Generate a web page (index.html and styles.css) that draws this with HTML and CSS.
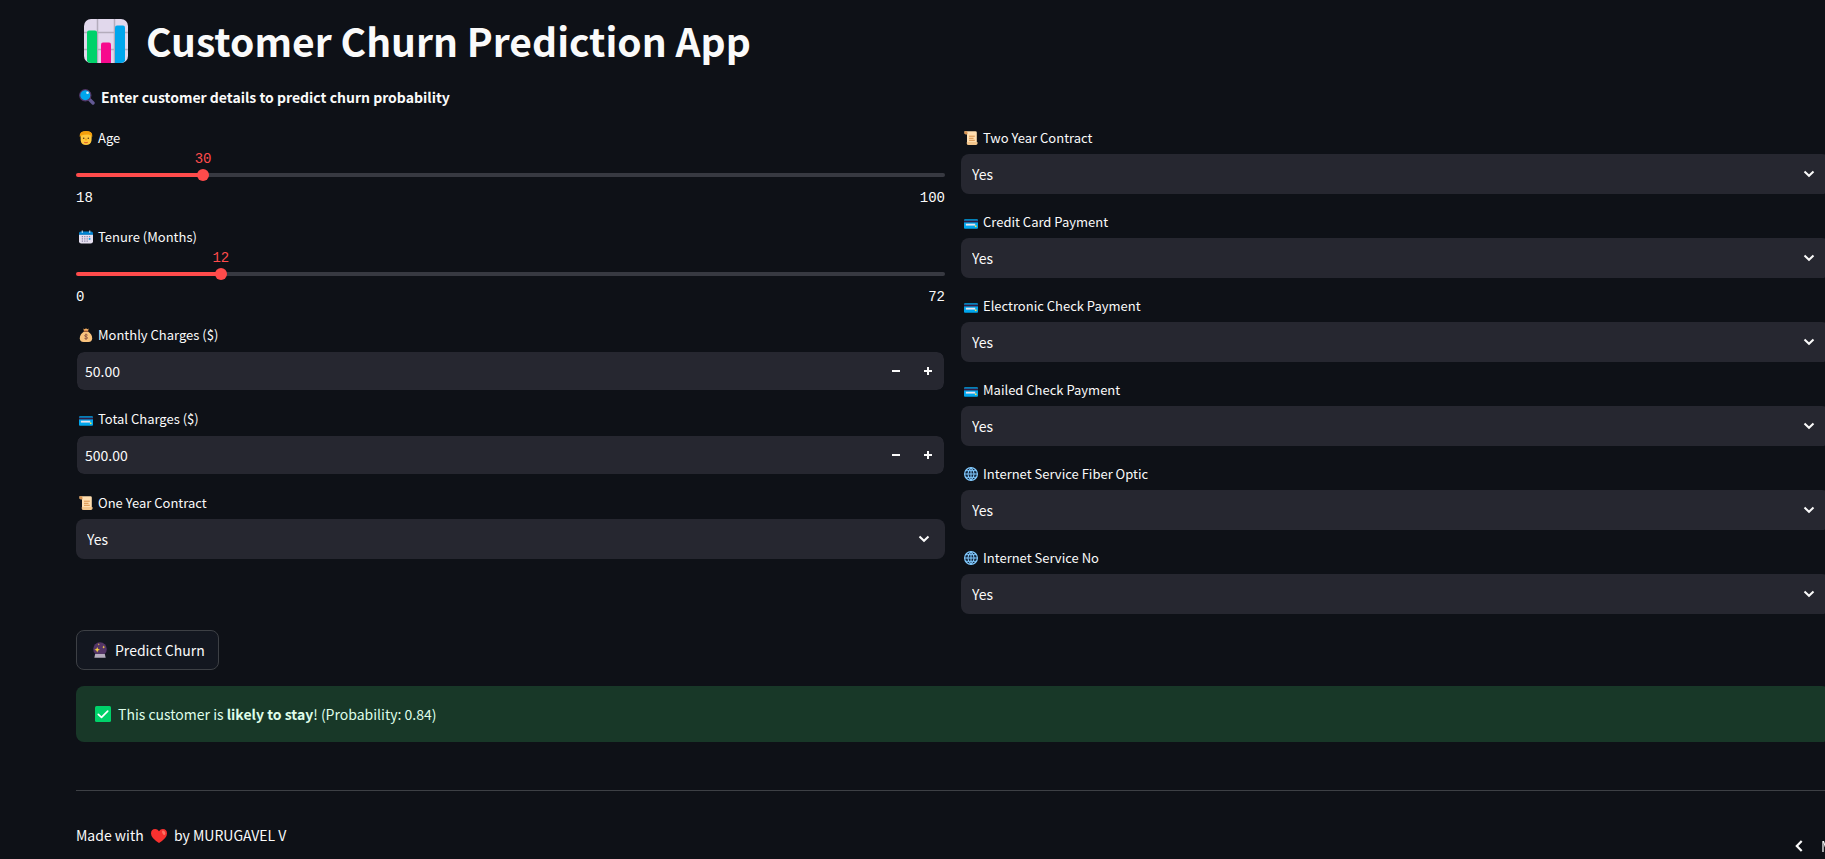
FILE: index.html
```html
<!DOCTYPE html>
<html lang="en">
<head>
<meta charset="utf-8">
<meta name="viewport" content="width=device-width, initial-scale=1">
<title>Customer Churn Prediction App</title>
<link rel="stylesheet" href="styles.css">
</head>
<body>
<svg class="defs" aria-hidden="true">
  <symbol id="i-chart" viewBox="0 0 44 44">
    <rect width="44" height="44" rx="7" fill="#e1d8ec"/>
    <path d="M13.500 0V44M30.500 0V44M0 13.500H44M0 30.500H44" stroke="#b4acbc" stroke-width="1.500" fill="none"/>
    <path d="M3 13.500a2 2 0 0 1 2-2h6a2 2 0 0 1 2 2V44H7q-3 0-4-2z" fill="#00d26a"/>
    <path d="M17 25.500a2 2 0 0 1 2-2h6a2 2 0 0 1 2 2V44H17z" fill="#f70a8d"/>
    <path d="M31 8.500a2 2 0 0 1 2-2h6a2 2 0 0 1 2 2V42q-2 2-4 2h-6z" fill="#00a6ed"/>
  </symbol>
  <symbol id="i-search" viewBox="0 0 16 16">
    <path d="M10.500 10.500L14 14" stroke="#635994" stroke-width="3.400" stroke-linecap="round"/>
    <circle cx="6.300" cy="6.300" r="5.600" fill="#00a6ed" stroke="#533566" stroke-width="1.200"/>
    <circle cx="8.500" cy="3.800" r="1.300" fill="#cfeffb"/>
  </symbol>
  <symbol id="i-face" viewBox="0 0 14 14">
    <path d="M1.500 4Q1 .3 7 .2q6-.1 5.800 4l-.3 5.500Q11.500 14 7 14T1.700 9.700z" fill="#ffc83d"/>
    <path d="M.8 6Q.2 1.500 4 .6 7-.5 10.500.6q3.300 1.200 2.700 5.400L12 4.600 9.500 3.600 5 3.800 2.300 4.400z" fill="#f59f0b"/>
    <circle cx="4.700" cy="7.200" r=".8" fill="#5c3515"/><circle cx="9.300" cy="7.200" r=".8" fill="#5c3515"/>
    <path d="M7 7.500v2" stroke="#ed9200" stroke-width="1"/>
    <path d="M5.200 11.300q1.800 1 3.600 0" stroke="#d9542b" stroke-width="1" fill="none"/>
  </symbol>
  <symbol id="i-calendar" viewBox="0 0 15 14">
    <path d="M0 4h15v7.500q0 2.500-2.500 2.500h-10Q0 14 0 11.500z" fill="#e6e0f0"/>
    <path d="M0 4.500V3q0-2 2-2h11q2 0 2 2v1.500z" fill="#0083d1"/>
    <path d="M3.500 0v2.600M11.500 0v2.600" stroke="#b9d7ee" stroke-width="1.200"/>
    <path d="M3 6.500h9M3 9h9M3 11.500h6.500" stroke="#8b85a5" stroke-width="1.300" stroke-dasharray="1.300 1.250"/>
    <rect x="10.500" y="8.200" width="1.700" height="1.700" fill="#00a6ed"/>
  </symbol>
  <symbol id="i-money" viewBox="0 0 14 14">
    <path d="M4.300.5l1.500.8L7 .2l1.300 1L9.700.5 9 3.200H5z" fill="#f3ad61"/>
    <path d="M5 3.500h4q4.200 2.700 4.200 6.800Q13.200 14 9.500 14h-5Q.8 14 .8 10.300.8 6.200 5 3.500z" fill="#f9c27d"/>
    <path d="M4.800 3.200h4.400" stroke="#9a4b2a" stroke-width="1"/>
    <path d="M8.700 7.200Q7 6 5.800 7.200q-.5 1.200 1.200 1.500t1.500 1.600q-1.200 1.200-3.100 0M7 5.600v6.300" stroke="#8c5543" stroke-width=".9" fill="none"/>
  </symbol>
  <symbol id="i-card" viewBox="0 0 15 10">
    <rect width="15" height="10" rx="1" fill="#00a6ed"/>
    <rect y="1.300" width="15" height="2" fill="#321b41"/>
    <rect x="2" y="4.700" width="10" height="2" fill="#e8e3ee"/>
    <rect x="11.700" y="6.600" width="1.700" height="1.700" fill="#f9e64f"/>
  </symbol>
  <symbol id="i-scroll" viewBox="0 0 14 14">
    <path d="M.5.3h11q1.300 0 1.300 1.300V12H3V3.200H1.800Q.5 3.200.5 2z" fill="#ffdeb0"/>
    <path d="M.5.300h2q1 .5 1 1.700v1.200H1.800Q.5 3.200.5 2z" fill="#d9924f"/>
    <path d="M2.800 11H13.500v1.200Q13.500 14 12 14H4.500Q2.800 14 2.800 12.400z" fill="#f3c58b"/>
    <path d="M5 5.200h5.800M5 7.300h4.500M5 9.300h5.800" stroke="#d3883e" stroke-width=".9"/>
  </symbol>
  <symbol id="i-globe" viewBox="0 0 14 14">
    <circle cx="7" cy="7" r="6.400" fill="#10233a" stroke="#83cbff" stroke-width="1.200"/>
    <path d="M7 .6v12.800M.6 7h12.800M1.600 3.700h10.800M1.600 10.300h10.800M7 .6Q.8 7 7 13.400 13.200 7 7 .6" stroke="#83cbff" stroke-width="1" fill="none"/>
  </symbol>
  <symbol id="i-crystal" viewBox="0 0 16 16">
    <circle cx="8" cy="7" r="6.800" fill="#533566"/>
    <path d="M3.200 12h9.600l.9 3.700H2.300z" fill="#b4acbc"/>
    <path d="M5.200 5l.8 2 2 .8-2 .8-.8 2-.8-2-2-.8 2-.8z" fill="#fcd53f"/>
    <path d="M11.700 3.600l.5 1.100 1 .4-1 .5-.5 1-.5-1-1-.5 1-.4zM6.800 1.200l.3.800.8.300-.8.300-.3.800-.3-.8-.8-.3.800-.3z" fill="#fcd53f"/>
  </symbol>
  <symbol id="i-check" viewBox="0 0 16 16">
    <rect width="16" height="16" rx="1.500" fill="#00d26a"/>
    <path d="M3.300 8.400l3.200 3 6.200-6.300" stroke="#fff" stroke-width="1.700" stroke-linecap="round" stroke-linejoin="round" fill="none"/>
  </symbol>
  <symbol id="i-heart" viewBox="0 0 16 14">
    <path d="M8 2.200Q6.500.1 4.200.1 0 .300 0 4.600 0 9.200 8 14q8-4.800 8-9.400Q16 .3 11.800.1 9.500.1 8 2.200z" fill="#f8312f"/>
    <path d="M11.500 1.500q3 .3 2.800 3.200-.4 1.800-1.500 1.200-2.700-2.400-1.300-4.400z" fill="#ff7363"/>
  </symbol>
  <symbol id="i-down" viewBox="0 0 12 8">
    <path d="M1.500 1.500L6 5.800l4.500-4.300" stroke="currentColor" stroke-width="2" fill="none"/>
  </symbol>
  <symbol id="i-left" viewBox="0 0 8 12">
    <path d="M6.700 1L1.800 6l4.900 5" stroke="currentColor" stroke-width="2.200" fill="none"/>
  </symbol>
  <symbol id="i-minus" viewBox="0 0 8 8"><path d="M0 4h8" stroke="currentColor" stroke-width="2"/></symbol>
  <symbol id="i-plus" viewBox="0 0 8 8"><path d="M0 4h8M4 0v8" stroke="currentColor" stroke-width="2"/></symbol>
</svg>

<main class="app">
  <h1 class="title"><svg class="title-icon"><use href="#i-chart"/></svg>Customer Churn Prediction App</h1>
  <p class="intro"><svg class="icon-md"><use href="#i-search"/></svg><strong>Enter customer details to predict churn probability</strong></p>

  <form class="form">
    <div class="columns">
      <div class="column">
        <div class="sliders">
          <div class="field">
            <label class="label" for="age"><svg class="icon"><use href="#i-face"/></svg>Age</label>
            <div class="slider" style="--fill: 14.63%">
              <output class="slider-value" for="age">30</output>
              <div class="rail"></div>
              <input class="range" id="age" type="range" min="18" max="100" value="30">
            </div>
            <div class="bounds"><span>18</span><span>100</span></div>
          </div>
          <div class="field">
            <label class="label" for="tenure"><svg class="icon"><use href="#i-calendar"/></svg>Tenure (Months)</label>
            <div class="slider" style="--fill: 16.67%">
              <output class="slider-value" for="tenure">12</output>
              <div class="rail"></div>
              <input class="range" id="tenure" type="range" min="0" max="72" value="12">
            </div>
            <div class="bounds"><span>0</span><span>72</span></div>
          </div>
        </div>
        <div class="field">
          <label class="label" for="monthly"><svg class="icon"><use href="#i-money"/></svg>Monthly Charges ($)</label>
          <div class="number">
            <input class="number-input" id="monthly" type="number" step="0.01" value="50.00">
            <button class="step" type="button" aria-label="Decrease"><svg class="step-icon"><use href="#i-minus"/></svg></button>
            <button class="step" type="button" aria-label="Increase"><svg class="step-icon"><use href="#i-plus"/></svg></button>
          </div>
        </div>
        <div class="field">
          <label class="label" for="total"><svg class="icon icon-card"><use href="#i-card"/></svg>Total Charges ($)</label>
          <div class="number">
            <input class="number-input" id="total" type="number" step="0.01" value="500.00">
            <button class="step" type="button" aria-label="Decrease"><svg class="step-icon"><use href="#i-minus"/></svg></button>
            <button class="step" type="button" aria-label="Increase"><svg class="step-icon"><use href="#i-plus"/></svg></button>
          </div>
        </div>
        <div class="field">
          <label class="label" for="one-year"><svg class="icon"><use href="#i-scroll"/></svg>One Year Contract</label>
          <div class="select"><select class="select-input" id="one-year"><option>Yes</option><option>No</option></select><svg class="chevron"><use href="#i-down"/></svg></div>
        </div>
      </div>

      <div class="column">
        <div class="field">
          <label class="label" for="two-year"><svg class="icon"><use href="#i-scroll"/></svg>Two Year Contract</label>
          <div class="select"><select class="select-input" id="two-year"><option>Yes</option><option>No</option></select><svg class="chevron"><use href="#i-down"/></svg></div>
        </div>
        <div class="field">
          <label class="label" for="credit"><svg class="icon icon-card"><use href="#i-card"/></svg>Credit Card Payment</label>
          <div class="select"><select class="select-input" id="credit"><option>Yes</option><option>No</option></select><svg class="chevron"><use href="#i-down"/></svg></div>
        </div>
        <div class="field">
          <label class="label" for="electronic"><svg class="icon icon-card"><use href="#i-card"/></svg>Electronic Check Payment</label>
          <div class="select"><select class="select-input" id="electronic"><option>Yes</option><option>No</option></select><svg class="chevron"><use href="#i-down"/></svg></div>
        </div>
        <div class="field">
          <label class="label" for="mailed"><svg class="icon icon-card"><use href="#i-card"/></svg>Mailed Check Payment</label>
          <div class="select"><select class="select-input" id="mailed"><option>Yes</option><option>No</option></select><svg class="chevron"><use href="#i-down"/></svg></div>
        </div>
        <div class="field">
          <label class="label" for="fiber"><svg class="icon"><use href="#i-globe"/></svg>Internet Service Fiber Optic</label>
          <div class="select"><select class="select-input" id="fiber"><option>Yes</option><option>No</option></select><svg class="chevron"><use href="#i-down"/></svg></div>
        </div>
        <div class="field">
          <label class="label" for="no-internet"><svg class="icon"><use href="#i-globe"/></svg>Internet Service No</label>
          <div class="select"><select class="select-input" id="no-internet"><option>Yes</option><option>No</option></select><svg class="chevron"><use href="#i-down"/></svg></div>
        </div>
      </div>
    </div>
    <button class="predict" type="button"><svg class="icon-md"><use href="#i-crystal"/></svg>Predict Churn</button>
  </form>

  <div class="alert" role="status"><svg class="icon-md"><use href="#i-check"/></svg><span>This customer is <strong>likely to stay</strong>! (Probability: 0.84)</span></div>
  <hr class="divider">
  <p class="credit">Made with <svg class="heart"><use href="#i-heart"/></svg> by MURUGAVEL V</p>
</main>
<button class="manage" type="button"><svg class="manage-icon"><use href="#i-left"/></svg>Manage app</button>
</body>
</html>
```
FILE: styles.css
```css
* { box-sizing: border-box; }

body {
  margin: 0;
  min-height: 100vh;
  overflow: hidden;
  background: #0e1117;
  color: #fafafa;
  font: 14px/24px "Noto Sans CJK JP", "Noto Sans CJK SC", "Noto Sans", sans-serif;
}

button, input, select { font: inherit; color: inherit; }
.defs { position: absolute; width: 0; height: 0; }

.app {
  margin-right: -5px;
  padding: 14px 0 0 76px;
}

.title {
  display: flex;
  align-items: center;
  gap: 18px;
  margin: 0;
  padding-left: 8px;
  font-size: 39px;
  line-height: 53px;
  font-weight: 700;
}
.title-icon { width: 44px; height: 44px; }

.intro {
  display: flex;
  align-items: center;
  gap: 6px;
  margin: 18px 0 17px;
  padding-left: 3px;
}
.icon-md { width: 16px; height: 16px; flex: none; }

.form {
  display: flex;
  flex-direction: column;
  align-items: flex-start;
  gap: 16px;
}
.columns {
  display: grid;
  grid-template-columns: 1fr 1fr;
  gap: 16px;
  width: 100%;
}
.column {
  display: flex;
  flex-direction: column;
  gap: 16px;
  min-width: 0;
}
.sliders {
  display: grid;
  grid-template-rows: 1fr 1fr;
  gap: 16px;
  min-height: 181px;
}

.label {
  display: flex;
  align-items: center;
  gap: 5px;
  margin-bottom: 4px;
  padding-left: 3px;
  font-size: 13px;
}
.icon { width: 14px; height: 14px; flex: none; }
.icon-card { height: 10px; margin-top: 3px; }

.slider {
  position: relative;
  display: grid;
  align-items: center;
  padding-top: 15px;
}
.rail {
  grid-area: 1 / 1;
  height: 4px;
  border-radius: 4px;
  background: linear-gradient(to right, #ff4b4b var(--fill), #373941 var(--fill));
}
.range {
  grid-area: 1 / 1;
  appearance: none;
  height: 12px;
  margin: 0 -6px;
  background: transparent;
}
.range::-webkit-slider-thumb {
  appearance: none;
  width: 12px;
  height: 12px;
  border-radius: 50%;
  background: #ff4b4b;
}
.slider-value {
  position: absolute;
  top: -3px;
  left: var(--fill);
  width: 40px;
  margin-left: -20px;
  text-align: center;
  line-height: 16px;
  font-family: "Liberation Mono", monospace;
  color: #ff4b4b;
}
.bounds {
  display: flex;
  justify-content: space-between;
  padding-top: 7px;
  line-height: 20px;
  font-family: "Liberation Mono", monospace;
}

.number {
  display: flex;
  border: 1px solid #0e1117;
  border-radius: 8px;
  height: 40px;
  background: #262730;
  background-clip: padding-box;
}
.number-input {
  flex: 1;
  min-width: 0;
  padding: 0 8px;
  border: 0;
  background: transparent;
  appearance: textfield;
}
.number-input::-webkit-inner-spin-button { appearance: none; margin: 0; }
.step {
  display: grid;
  place-items: center;
  width: 32px;
  padding: 0;
  border: 0;
  background: transparent;
}
.step-icon { width: 8px; height: 8px; }

.select { display: grid; align-items: center; }
.select-input {
  grid-area: 1 / 1;
  appearance: none;
  width: 100%;
  height: 40px;
  padding: 0 32px 0 11px;
  border: 0;
  border-radius: 8px;
  background: #262730;
}
.chevron {
  grid-area: 1 / 1;
  justify-self: end;
  width: 12px;
  height: 8px;
  margin-right: 15px;
  pointer-events: none;
}

.predict {
  display: flex;
  align-items: center;
  gap: 7px;
  height: 40px;
  padding: 0 13px 0 15px;
  border: 1px solid #3d4045;
  border-radius: 8px;
  background: #131720;
}

.alert {
  display: flex;
  align-items: center;
  gap: 7px;
  margin-top: 16px;
  padding: 16px 19px;
  border-radius: 8px;
  background: #183828;
  color: #dffde9;
}
.divider {
  height: 1px;
  margin: 48px 0 32px;
  border: 0;
  background: #3d4045;
}
.credit { margin: 0; }
.heart { width: 16px; height: 14px; margin: 0 4px; vertical-align: -2px; }

.manage {
  position: fixed;
  right: -82px;
  bottom: 0;
  display: flex;
  align-items: center;
  gap: 18px;
  width: 112px;
  height: 26px;
  padding: 0;
  border: 0;
  background: transparent;
  white-space: nowrap;
}
.manage-icon { flex: none; width: 8px; height: 12px; }
```
